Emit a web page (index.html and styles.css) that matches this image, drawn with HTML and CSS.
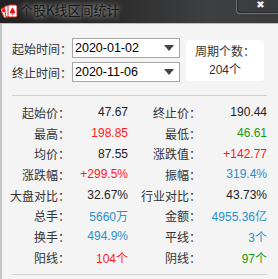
FILE: index.html
```html
<!DOCTYPE html>
<html>
<head>
<meta charset="utf-8">
<link rel="stylesheet" href="styles.css">
</head>
<body>
<div class="win">
  <div class="titlebar">
    <svg class="app-icon" width="17" height="14" viewBox="0 0 17 14">
      <rect x="1" y="3" width="9" height="10" rx="1.5" fill="#fff" stroke="#d21" stroke-width="1" transform="rotate(-25 5.5 8)"/>
      <rect x="4" y="1.5" width="9" height="11" rx="1.5" fill="#fff" stroke="#d21" stroke-width="1" transform="rotate(-8 8.5 7)"/>
      <rect x="7" y="1" width="9" height="12" rx="1.5" fill="#fff" stroke="#d21" stroke-width="1"/>
      <path d="M11.5 3.5 C10 6 9 7 9 8.3 C9 9.5 10.5 10 11.5 9 C12.5 10 14 9.5 14 8.3 C14 7 13 6 11.5 3.5 Z M11.5 9 L10.8 11 L12.2 11 Z" fill="#e0141e"/>
      <rect x="2" y="4" width="3" height="3" fill="#e0141e" transform="rotate(-25 5.5 8)"/>
    </svg>
    <span class="title">个股K线区间统计</span>
    <div class="close"><span class="x">✖</span></div>
  </div>
  <div class="content">
    <div class="form">
      <div class="fields">
        <div class="field">
          <span class="flabel">起始时间：</span>
          <div class="select"><span class="date">2020-01-02</span><span class="arrow"></span></div>
        </div>
        <div class="field">
          <span class="flabel">终止时间：</span>
          <div class="select"><span class="date">2020-11-06</span><span class="arrow"></span></div>
        </div>
      </div>
      <div class="period">
        <div>周期个数：</div>
        <div>204个</div>
      </div>
    </div>
    <div class="stats">
      <span class="lbl">起始价：</span><span class="val">47.67</span>
      <span class="lbl">终止价：</span><span class="val">190.44</span>
      <span class="lbl">最高：</span><span class="val red">198.85</span>
      <span class="lbl">最低：</span><span class="val green">46.61</span>
      <span class="lbl">均价：</span><span class="val">87.55</span>
      <span class="lbl">涨跌值：</span><span class="val red">+142.77</span>
      <span class="lbl">涨跌幅：</span><span class="val red">+299.5%</span>
      <span class="lbl">振幅：</span><span class="val blue">319.4%</span>
      <span class="lbl">大盘对比：</span><span class="val">32.67%</span>
      <span class="lbl">行业对比：</span><span class="val">43.73%</span>
      <span class="lbl">总手：</span><span class="val blue">5660万</span>
      <span class="lbl">金额：</span><span class="val blue">4955.36亿</span>
      <span class="lbl">换手：</span><span class="val blue">494.9%</span>
      <span class="lbl">平线：</span><span class="val blue">3个</span>
      <span class="lbl">阳线：</span><span class="val red">104个</span>
      <span class="lbl">阴线：</span><span class="val green">97个</span>
    </div>
  </div>
</div>
</body>
</html>
```

FILE: styles.css
```css
html, body {
  margin: 0;
  padding: 0;
  background: #f4f4f4;
}
.win {
  width: 278px;
  height: 279px;
  overflow: hidden;
  font-family: "Liberation Sans", "Noto Sans CJK SC", sans-serif;
  font-size: 12px;
  color: #333;
  background: #f4f4f4;
}
.titlebar {
  height: 23px;
  display: flex;
  align-items: flex-start;
  background: linear-gradient(to right, #232323 0%, #2c2c2c 40%, #3e3f41 75%, #3a3b3d 100%);
  border-bottom: 1px solid #bdbdbd;
}
.app-icon {
  margin: 4px 2px 0 1px;
  flex: none;
}
.title {
  font-family: "Noto Sans CJK SC", sans-serif;
  font-size: 13px;
  line-height: 18px;
  margin-top: 1px;
  color: #151515;
  text-shadow: 0 0 4px rgba(230,230,230,0.7), 0 0 8px rgba(200,200,200,0.5);
}
.close {
  margin-left: auto;
  width: 42px;
  height: 14px;
  box-sizing: border-box;
  border: 1px solid #6f7072;
  border-top: none;
  border-right: none;
  border-bottom-left-radius: 4px;
  box-shadow: inset 1px -1px 0 #2a2a2a;
  display: flex;
  justify-content: center;
  padding-left: 6px;
}
.close .x {
  color: #f0f0f0;
  font-family: "DejaVu Sans", sans-serif;
  font-size: 10px;
  line-height: 9px;
  font-weight: bold;
}
.content {
  border-left: 2px solid #c6c6c6;
  height: 255px;
  box-sizing: border-box;
  padding: 14px 0 0 10px;
}
.form {
  display: flex;
  align-items: flex-start;
  padding-bottom: 13px;
  border-bottom: 1px solid #cfcfcf;
  width: 255px;
}
.fields {
  display: flex;
  flex-direction: column;
  gap: 4px;
}
.field {
  display: flex;
  align-items: center;
}
.flabel {
  width: 60px;
  font-size: 12px;
  color: #333;
  white-space: nowrap;
}
.select {
  width: 108px;
  height: 20px;
  box-sizing: border-box;
  border: 1px solid #a6a6a6;
  background: #fff;
  display: flex;
  align-items: center;
  padding-left: 2px;
}
.date {
  font-size: 12.5px;
  color: #000;
  flex: 1;
}
.arrow {
  width: 0;
  height: 0;
  border-left: 5px solid transparent;
  border-right: 5px solid transparent;
  border-top: 6px solid #444;
  margin-right: 5px;
}
.period {
  margin-left: 6px;
  margin-top: 2px;
  width: 78px;
  height: 41px;
  background: #fff;
  border-radius: 4px;
  display: flex;
  flex-direction: column;
  align-items: center;
  justify-content: center;
  gap: 2px;
  color: #333;
  line-height: 16px;
}
.stats {
  display: grid;
  grid-template-columns: 58px 58px 73px 66px;
  grid-auto-rows: 20.7px;
  align-items: center;
  padding: 6px 0 6px;
  width: 255px;
  border-bottom: 1px solid #cfcfcf;
}
.lbl {
  justify-self: end;
  white-space: nowrap;
  color: #333;
}
.val {
  justify-self: end;
  white-space: nowrap;
  color: #222;
}
.red { color: #ff1a1a; }
.green { color: #159a15; }
.blue { color: #2a8fc9; }
```
